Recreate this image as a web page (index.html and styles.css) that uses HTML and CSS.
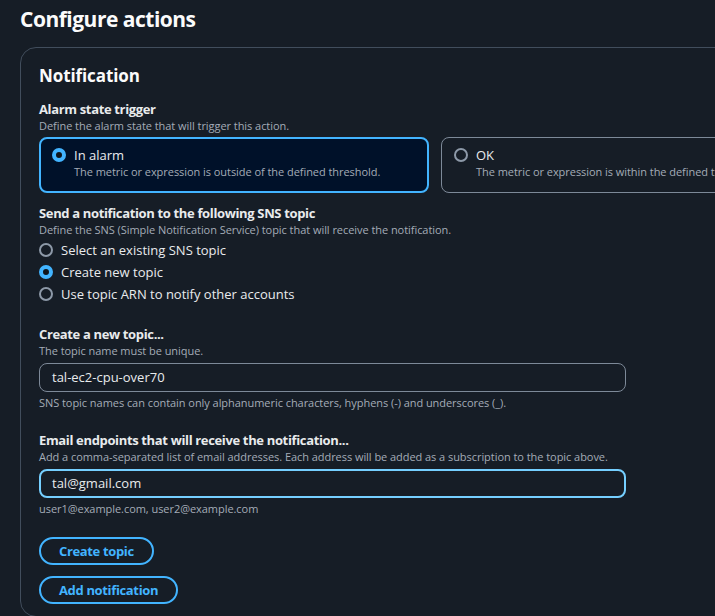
FILE: index.html
```html
<!DOCTYPE html>
<html lang="en">
<head>
<meta charset="utf-8">
<link rel="stylesheet" href="styles.css">
</head>
<body>
<div class="page">
  <h1 class="page-title">Configure actions</h1>
  <section class="panel">
    <h2 class="panel-title">Notification</h2>

    <div class="field">
      <div class="label">Alarm state trigger</div>
      <div class="desc">Define the alarm state that will trigger this action.</div>
      <div class="tiles">
        <div class="tile tile-selected">
          <span class="radio radio-on"></span>
          <div class="tile-text">
            <div class="tile-label">In alarm</div>
            <div class="tile-desc">The metric or expression is outside of the defined threshold.</div>
          </div>
        </div>
        <div class="tile">
          <span class="radio"></span>
          <div class="tile-text">
            <div class="tile-label">OK</div>
            <div class="tile-desc">The metric or expression is within the defined threshold.</div>
          </div>
        </div>
      </div>
    </div>

    <div class="field">
      <div class="label">Send a notification to the following SNS topic</div>
      <div class="desc">Define the SNS (Simple Notification Service) topic that will receive the notification.</div>
      <div class="radio-group">
        <div class="radio-row"><span class="radio"></span><span>Select an existing SNS topic</span></div>
        <div class="radio-row"><span class="radio radio-on"></span><span>Create new topic</span></div>
        <div class="radio-row"><span class="radio"></span><span>Use topic ARN to notify other accounts</span></div>
      </div>
    </div>

    <div class="field field-gap">
      <div class="label">Create a new topic...</div>
      <div class="desc">The topic name must be unique.</div>
      <div class="input">tal-ec2-cpu-over70</div>
      <div class="hint">SNS topic names can contain only alphanumeric characters, hyphens (-) and underscores (_).</div>
    </div>

    <div class="field field-gap">
      <div class="label">Email endpoints that will receive the notification...</div>
      <div class="desc">Add a comma-separated list of email addresses. Each address will be added as a subscription to the topic above.</div>
      <div class="input input-focus">tal@gmail.com</div>
      <div class="hint">user1@example.com, user2@example.com</div>
    </div>

    <div class="buttons">
      <button class="btn">Create topic</button>
      <button class="btn">Add notification</button>
    </div>
  </section>
</div>
</body>
</html>
```
FILE: styles.css
```css
* { box-sizing: border-box; }
html, body {
  margin: 0;
  background: #161d26;
  overflow: hidden;
}
body {
  font-family: "Open Sans", "Noto Sans", sans-serif;
  color: #d1d5db;
  width: 715px;
  height: 616px;
}
.page {
  padding: 4px 0 0 20px;
  width: 760px;
}
.page-title {
  margin: 0;
  font-size: 21px;
  line-height: 30px;
  font-weight: 700;
  color: #fbfbfb;
  letter-spacing: -0.5px;
}
.panel {
  margin-top: 13px;
  border: 1px solid #414d5c;
  border-radius: 16px;
  padding: 16px 18px 12px 18px;
  background: #161d26;
}
.panel-title {
  margin: 0 0 12px 0;
  font-size: 17px;
  line-height: 24px;
  font-weight: 700;
  color: #fbfbfb;
  letter-spacing: -0.1px;
}
.field { margin-bottom: 11px; }
.field-gap { margin-top: 21px; margin-bottom: 0; }
.field-gap + .field-gap { margin-top: 20px; }
.label {
  font-size: 13px;
  font-weight: 700;
  line-height: 18px;
  color: #e9ebed;
  letter-spacing: -0.35px;
}
.desc, .hint, .tile-desc {
  font-size: 11px;
  line-height: 16px;
  color: #a4acb7;
  letter-spacing: -0.05px;
}
.hint { margin-top: 3px; }
.tiles {
  display: flex;
  gap: 12px;
  margin-top: 3px;
}
.tile {
  flex: 0 0 auto;
  width: 390px;
  height: 56px;
  border: 1px solid #7d8998;
  border-radius: 8px;
  display: flex;
  align-items: flex-start;
  gap: 8px;
  padding: 8px 12px;
}
.tile-selected {
  border: 2px solid #42b4ff;
  background: #001129;
  padding: 7px 11px;
}
.tile-text { display: flex; flex-direction: column; }
.tile-label {
  font-size: 13px;
  line-height: 18px;
  color: #e9ebed;
}
.radio {
  flex: 0 0 auto;
  width: 14px;
  height: 14px;
  border-radius: 50%;
  border: 2px solid #8d99a8;
  margin-top: 2px;
}
.radio-on {
  border: 4px solid #42b4ff;
  background: #0f141a;
}
.radio-group {
  display: flex;
  flex-direction: column;
  gap: 3.5px;
  margin-top: 3px;
}
.radio-row {
  display: flex;
  align-items: center;
  gap: 8px;
  font-size: 13px;
  line-height: 18.5px;
  color: #e9ebed;
}
.radio-row .radio { margin-top: 0; }
.input {
  width: 587px;
  height: 29px;
  margin-top: 4px;
  border: 1px solid #7d8998;
  border-radius: 8px;
  padding: 0 12px;
  font-size: 13px;
  line-height: 27px;
  color: #e9ebed;
  background: transparent;
}
.input-focus {
  border: 2px solid #75cfff;
  padding: 0 11px;
  line-height: 25px;
}
.buttons {
  display: flex;
  flex-direction: column;
  align-items: flex-start;
  gap: 11px;
  margin-top: 20px;
}
.btn {
  font-family: inherit;
  font-size: 13px;
  font-weight: 700;
  letter-spacing: -0.35px;
  color: #42b4ff;
  background: transparent;
  border: 2px solid #42b4ff;
  border-radius: 20px;
  height: 28px;
  padding: 0 18px;
  cursor: pointer;
}
```
